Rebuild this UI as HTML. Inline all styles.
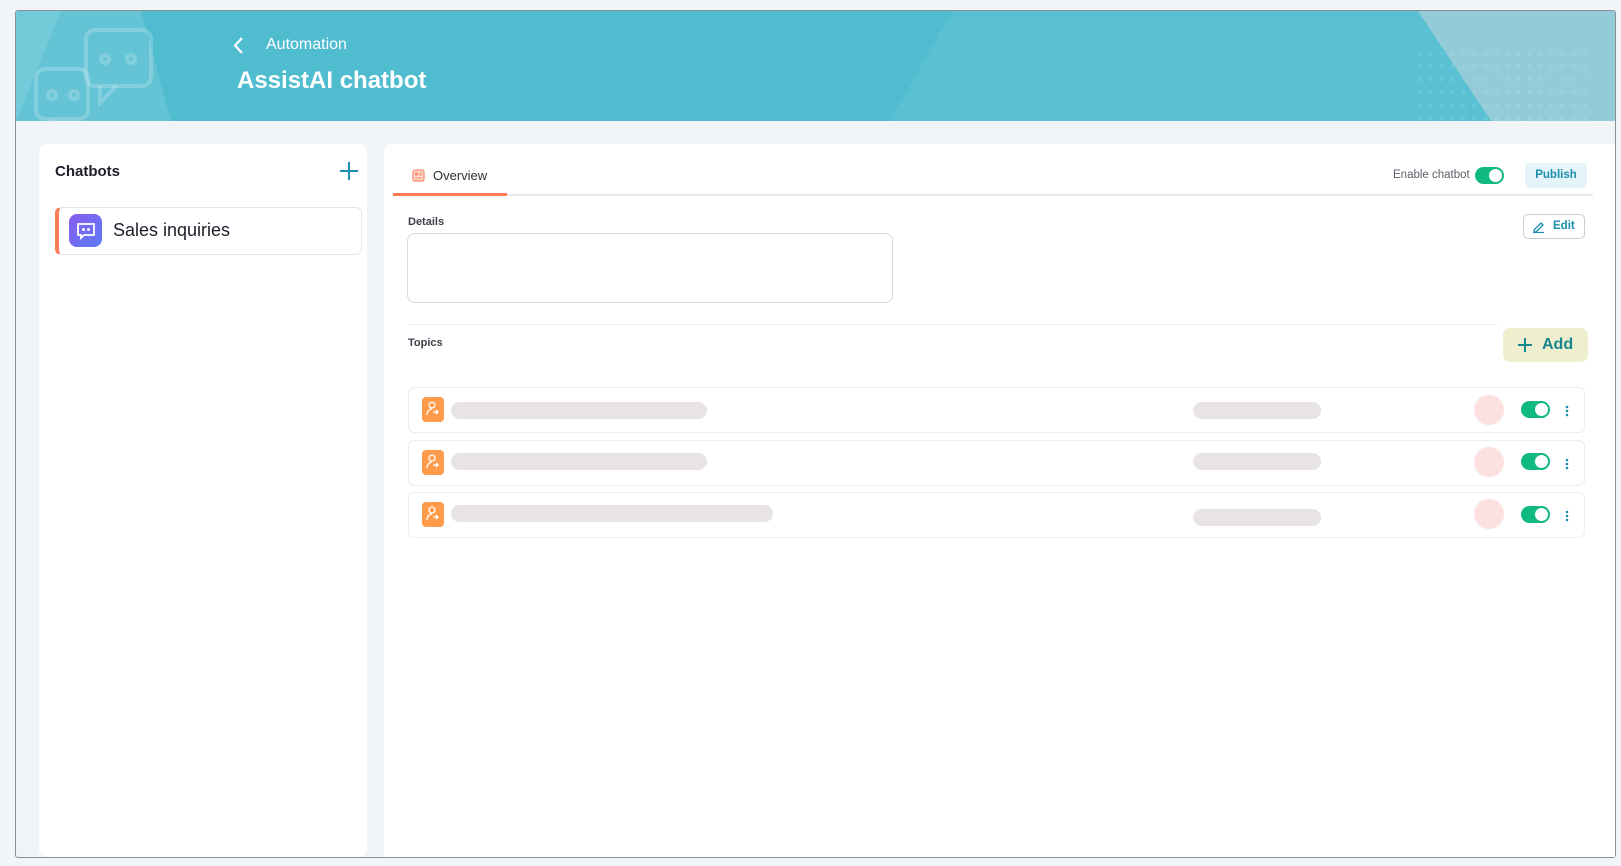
<!DOCTYPE html>
<html><head><meta charset="utf-8"><style>
*{box-sizing:border-box;margin:0;padding:0}
body{width:1621px;height:866px;background:#f1f5f8;font-family:"Liberation Sans",sans-serif;position:relative;overflow:hidden}
.frame{position:absolute;left:15px;top:10px;width:1601px;height:848px;border:1px solid #8a8f94;border-radius:3px;background:#f0f4f7;overflow:hidden}
.hdr{position:absolute;left:0;top:0;width:100%;height:110px;background:#4fbcd0;overflow:hidden}
.abs{position:absolute}
.panel{position:absolute;background:#fff;border-radius:8px}
.sk{position:absolute;background:#e8e4e4;border-radius:9px;height:17px}
.tg{position:absolute;width:29px;height:17px;border-radius:9px;background:#0fb981}
.tg::after{content:"";position:absolute;right:2px;top:2px;width:13px;height:13px;border-radius:50%;background:#fff}
.row{position:absolute;left:408px;width:1177px;height:46px;border:1px solid #eceeef;border-radius:6px;background:#fff}
</style></head><body>
<div class="frame">
 <div class="hdr">
  <svg class="abs" style="left:0;top:0" width="1601" height="110">
   <polygon points="0,0 125,0 155,110 0,110" fill="#ffffff" opacity="0.12"/>
   <polygon points="0,110 45,0 0,0" fill="#ffffff" opacity="0.1"/>
   <polygon points="936,0 1560,0 1560,110 874,110" fill="#5ec3d4" opacity="0.7"/>
   <polygon points="1402,0 1601,0 1601,110 1475,110" fill="#93cbd8"/>
   <g fill="none" stroke="#ffffff" stroke-opacity="0.2" stroke-width="4">
    <rect x="20" y="58" width="52" height="50" rx="9"/>
    <path d="M36 108 L40 116"/>
    <rect x="70" y="19" width="65" height="56" rx="9"/>
    <path d="M84 75 L84 92 L100 75"/>
    <circle cx="89" cy="48" r="4"/><circle cx="115" cy="48" r="4"/>
    <circle cx="36" cy="84" r="4"/><circle cx="58" cy="84" r="4"/>
   </g>
   <g fill="#ffffff" fill-opacity="0.3">
    <pattern id="dp" x="1401" y="40" width="11" height="13" patternUnits="userSpaceOnUse"><circle cx="2.5" cy="2.5" r="2.3"/></pattern>
    <rect x="1401" y="40" width="176" height="75" fill="url(#dp)"/>
   </g>
  </svg>
  <svg class="abs" style="left:216px;top:25px" width="14" height="20"><path d="M10 2 L3 9.5 L10 17" stroke="#fff" stroke-width="2.2" fill="none"/></svg>
  <div class="abs" style="left:250px;top:25px;color:#fff;font-size:16px">Automation</div>
  <div class="abs" style="left:221px;top:56px;color:#fff;font-size:24px;font-weight:bold">AssistAI chatbot</div>
 </div>
</div>
<div class="panel" style="left:39px;top:144px;width:328px;height:713px"></div>
<div class="abs" style="left:55px;top:163px;font-size:15px;font-weight:bold;color:#1c1f2a">Chatbots</div>
<svg class="abs" style="left:340px;top:162px" width="18" height="18"><path d="M9 0V18M0 9H18" stroke="#1a8fae" stroke-width="2"/></svg>
<div class="abs" style="left:55px;top:207px;width:307px;height:48px;border:1px solid #e3e6e8;border-left:4px solid #ff7a57;border-radius:6px;background:#fff"></div>
<div class="abs" style="left:69px;top:214px;width:33px;height:33px;border-radius:8px;background:linear-gradient(135deg,#8a5cf0,#5b7cf3)"></div>
<svg class="abs" style="left:76px;top:221px" width="20" height="20"><path d="M2 3h16v11H8l-3 3v-3H2z" fill="none" stroke="#fff" stroke-width="1.8"/><circle cx="7.5" cy="8.5" r="1.5" fill="#fff"/><circle cx="12.5" cy="8.5" r="1.5" fill="#fff"/></svg>
<div class="abs" style="left:113px;top:220px;font-size:18px;color:#1c1f2a">Sales inquiries</div>

<div class="panel" style="left:384px;top:144px;width:1231px;height:713px;border-radius:8px 0 0 0"></div>
<div class="abs" style="left:393px;top:194px;width:1200px;height:2px;background:#e6eaee"></div>
<div class="abs" style="left:393px;top:193px;width:114px;height:3px;background:#ff7a57"></div>
<svg class="abs" style="left:412px;top:169px" width="13" height="13"><rect x="1" y="1" width="11" height="11" rx="2" fill="#ffd9cc" stroke="#ff8a6a" stroke-width="1.2"/><rect x="3" y="3.5" width="3" height="3" fill="#ff8a6a"/><path d="M7 4h3M7 6h3M3 9h7" stroke="#ff8a6a"/></svg>
<div class="abs" style="left:433px;top:168px;font-size:13px;color:#2b2f38">Overview</div>
<div class="abs" style="left:1393px;top:169px;font-size:11.5px;color:#5b606a">Enable chatbot</div>
<div class="tg" style="left:1475px;top:167px"></div>
<div class="abs" style="left:1525px;top:163px;width:62px;height:25px;background:#e4f4f8;border-radius:4px;color:#1a8fae;font-size:11.5px;font-weight:bold;text-align:center;line-height:25px">Publish</div>
<div class="abs" style="left:1523px;top:214px;width:62px;height:25px;border:1px solid #c9ced3;border-radius:5px;color:#1a8fae;font-size:11.5px;font-weight:bold;line-height:23px;padding-left:29px">Edit</div>
<svg class="abs" style="left:1532px;top:220px" width="13" height="13"><path d="M2 10L9 3l2 2-7 7H2z M1 12.5h11" fill="none" stroke="#1a8fae" stroke-width="1.3"/></svg>
<div class="abs" style="left:408px;top:216px;font-size:11px;font-weight:bold;color:#3b3f48">Details</div>
<div class="abs" style="left:407px;top:233px;width:486px;height:70px;border:1px solid #d8dbde;border-radius:8px"></div>
<div class="abs" style="left:408px;top:324px;width:1090px;height:1px;background:#eef0f2"></div>
<div class="abs" style="left:408px;top:337px;font-size:11px;font-weight:bold;color:#3b3f48">Topics</div>
<div class="abs" style="left:1503px;top:328px;width:85px;height:34px;border-radius:7px;background:#efefd0;color:#17878f;font-size:16px;font-weight:bold;line-height:34px;padding-left:39px">Add</div>
<svg class="abs" style="left:1518px;top:338px" width="14" height="14"><path d="M7 0V14M0 7H14" stroke="#17878f" stroke-width="2"/></svg>

<div class="row" style="top:387px"></div>
<div class="row" style="top:440px"></div>
<div class="row" style="top:492px"></div>
<div class="abs" style="left:422px;top:397px;width:22px;height:25px;border-radius:4px;background:#ff9b4a"></div>
<div class="abs" style="left:422px;top:450px;width:22px;height:25px;border-radius:4px;background:#ff9b4a"></div>
<div class="abs" style="left:422px;top:502px;width:22px;height:25px;border-radius:4px;background:#ff9b4a"></div>
<svg class="abs" style="left:422px;top:397px" width="22" height="25"><circle cx="10" cy="8" r="3" fill="none" stroke="#fff" stroke-width="1.3"/><path d="M5 18c0-4 3-6 5-6M11 15h5M14 13l2 2-2 2" fill="none" stroke="#fff" stroke-width="1.3"/></svg>
<svg class="abs" style="left:422px;top:450px" width="22" height="25"><circle cx="10" cy="8" r="3" fill="none" stroke="#fff" stroke-width="1.3"/><path d="M5 18c0-4 3-6 5-6M11 15h5M14 13l2 2-2 2" fill="none" stroke="#fff" stroke-width="1.3"/></svg>
<svg class="abs" style="left:422px;top:502px" width="22" height="25"><circle cx="10" cy="8" r="3" fill="none" stroke="#fff" stroke-width="1.3"/><path d="M5 18c0-4 3-6 5-6M11 15h5M14 13l2 2-2 2" fill="none" stroke="#fff" stroke-width="1.3"/></svg>
<div class="sk" style="left:451px;top:402px;width:256px"></div>
<div class="sk" style="left:451px;top:453px;width:256px"></div>
<div class="sk" style="left:451px;top:505px;width:322px"></div>
<div class="sk" style="left:1193px;top:402px;width:128px"></div>
<div class="sk" style="left:1193px;top:453px;width:128px"></div>
<div class="sk" style="left:1193px;top:509px;width:128px"></div>
<div class="abs" style="left:1474px;top:395px;width:30px;height:30px;border-radius:50%;background:#fde1e1"></div>
<div class="abs" style="left:1474px;top:447px;width:30px;height:30px;border-radius:50%;background:#fde1e1"></div>
<div class="abs" style="left:1474px;top:499px;width:30px;height:30px;border-radius:50%;background:#fde1e1"></div>
<div class="tg" style="left:1521px;top:401px"></div>
<div class="tg" style="left:1521px;top:453px"></div>
<div class="tg" style="left:1521px;top:506px"></div>
<svg class="abs" style="left:1565px;top:405px" width="4" height="12"><circle cx="2" cy="2" r="1.3" fill="#1a8fae"/><circle cx="2" cy="6" r="1.3" fill="#1a8fae"/><circle cx="2" cy="10" r="1.3" fill="#1a8fae"/></svg>
<svg class="abs" style="left:1565px;top:458px" width="4" height="12"><circle cx="2" cy="2" r="1.3" fill="#1a8fae"/><circle cx="2" cy="6" r="1.3" fill="#1a8fae"/><circle cx="2" cy="10" r="1.3" fill="#1a8fae"/></svg>
<svg class="abs" style="left:1565px;top:510px" width="4" height="12"><circle cx="2" cy="2" r="1.3" fill="#1a8fae"/><circle cx="2" cy="6" r="1.3" fill="#1a8fae"/><circle cx="2" cy="10" r="1.3" fill="#1a8fae"/></svg>
</body></html>
